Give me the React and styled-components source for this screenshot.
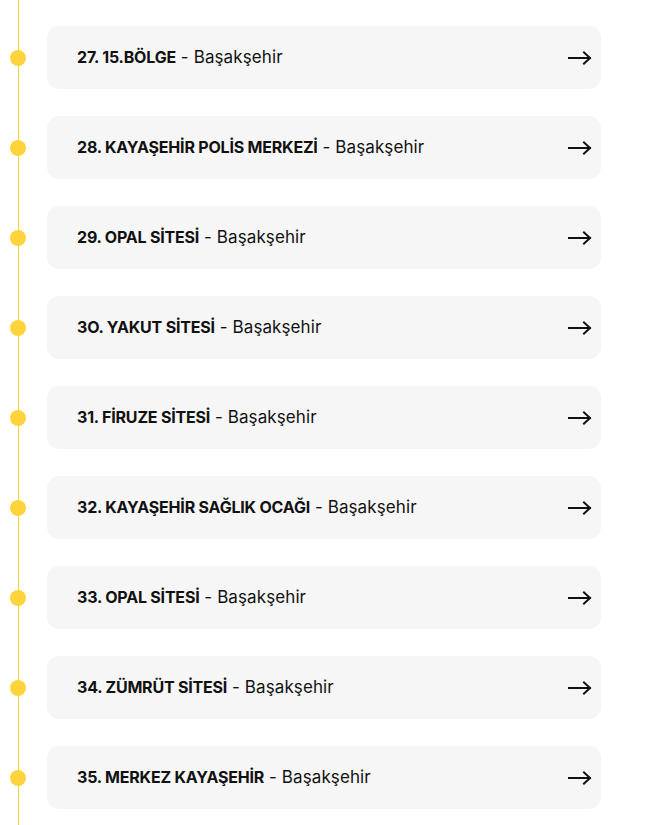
import React from 'react';
import styled, { createGlobalStyle } from 'styled-components';

const GlobalStyle = createGlobalStyle`
    body {
        margin: 0;
        background: #fff;
        font-family: 'Inter', 'Liberation Sans', sans-serif;
    }
`;

const stops = [
    { no: 27, name: '15.BÖLGE' },
    { no: 28, name: 'KAYAŞEHİR POLİS MERKEZİ' },
    { no: 29, name: 'OPAL SİTESİ' },
    { no: 30, name: 'YAKUT SİTESİ', label: '3O.' },
    { no: 31, name: 'FİRUZE SİTESİ' },
    { no: 32, name: 'KAYAŞEHİR SAĞLIK OCAĞI' },
    { no: 33, name: 'OPAL SİTESİ' },
    { no: 34, name: 'ZÜMRÜT SİTESİ' },
    { no: 35, name: 'MERKEZ KAYAŞEHİR' },
];

const Timeline = styled.ul`
    list-style: none;
    margin: 0;
    padding: 26px 0 17px 0;
    width: 653px;
    min-height: 825px;
    box-sizing: border-box;
    position: relative;
    display: flex;
    flex-direction: column;
    gap: 27px;

    &::before {
        content: '';
        position: absolute;
        left: 18px;
        top: 0;
        bottom: 0;
        width: 1px;
        background: #ffd43a;
    }
`;

const Stop = styled.li`
    display: flex;
    align-items: center;
    padding-left: 10px;
    gap: 21px;
`;

const Dot = styled.span`
    width: 16px;
    height: 16px;
    border-radius: 50%;
    background: #ffd43a;
    flex-shrink: 0;
`;

const Card = styled.a`
    width: 554px;
    height: 63px;
    box-sizing: border-box;
    padding: 0 9px 0 30px;
    border-radius: 12px;
    background: #f6f6f6;
    display: flex;
    align-items: center;
    justify-content: space-between;
    color: #111;
    text-decoration: none;
`;

const Title = styled.span`
    margin-top: -1px;
    line-height: 20px;
`;

const Name = styled.strong`
    font-size: 16px;
    font-weight: 700;
    letter-spacing: -0.2px;
`;

const District = styled.span`
    font-size: 17px;
    font-weight: 400;
    letter-spacing: 0.1px;
`;

const Arrow = () => (
    <svg width="24" height="14" viewBox="0 0 24 14" fill="none" stroke="#111" strokeWidth="2" strokeLinecap="square">
        <path d="M1 7 H22" />
        <path d="M16 1.5 L22 7 L16 12.5" />
    </svg>
);

export default function App() {
    return (
        <>
            <GlobalStyle />
            <Timeline>
                {stops.map(s => (
                    <Stop key={s.no}>
                        <Dot />
                        <Card href="#">
                            <Title>
                                <Name>{s.label || `${s.no}.`} {s.name}</Name>
                                <District> - Başakşehir</District>
                            </Title>
                            <Arrow />
                        </Card>
                    </Stop>
                ))}
            </Timeline>
        </>
    );
}
